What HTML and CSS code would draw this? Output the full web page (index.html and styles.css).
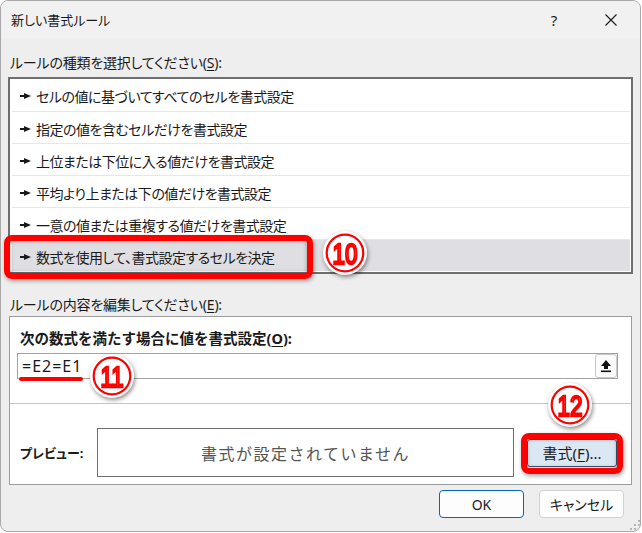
FILE: index.html
```html
<!DOCTYPE html>
<html lang="ja">
<head>
<meta charset="utf-8">
<title>新しい書式ルール</title>
<link rel="stylesheet" href="styles.css">
</head>
<body>
<div class="window">
  <div class="titlebar">
    <span class="title">新しい書式ルール</span>
    <span class="help">?</span>
    <span class="close"><svg width="12" height="12" viewBox="0 0 12 12"><path d="M0.5 0.5 L11.5 11.5 M11.5 0.5 L0.5 11.5" stroke="#1a1a1a" stroke-width="1.1" fill="none"/></svg></span>
  </div>
  <div class="body">
    <div class="label first">ルールの種類を選択してください(<u>S</u>):</div>
    <ul class="list">
      <li><svg class="arrow" width="11" height="6" viewBox="0 0 11 6"><rect x="0" y="2" width="5" height="2" fill="#1a1a1a"/><polygon points="4,0 11,3 4,6" fill="#1a1a1a"/></svg>セルの値に基づいてすべてのセルを書式設定</li>
      <li><svg class="arrow" width="11" height="6" viewBox="0 0 11 6"><rect x="0" y="2" width="5" height="2" fill="#1a1a1a"/><polygon points="4,0 11,3 4,6" fill="#1a1a1a"/></svg>指定の値を含むセルだけを書式設定</li>
      <li><svg class="arrow" width="11" height="6" viewBox="0 0 11 6"><rect x="0" y="2" width="5" height="2" fill="#1a1a1a"/><polygon points="4,0 11,3 4,6" fill="#1a1a1a"/></svg>上位または下位に入る値だけを書式設定</li>
      <li><svg class="arrow" width="11" height="6" viewBox="0 0 11 6"><rect x="0" y="2" width="5" height="2" fill="#1a1a1a"/><polygon points="4,0 11,3 4,6" fill="#1a1a1a"/></svg>平均より上または下の値だけを書式設定</li>
      <li><svg class="arrow" width="11" height="6" viewBox="0 0 11 6"><rect x="0" y="2" width="5" height="2" fill="#1a1a1a"/><polygon points="4,0 11,3 4,6" fill="#1a1a1a"/></svg>一意の値または重複する値だけを書式設定</li>
      <li class="selected"><svg class="arrow" width="11" height="6" viewBox="0 0 11 6"><rect x="0" y="2" width="5" height="2" fill="#1a1a1a"/><polygon points="4,0 11,3 4,6" fill="#1a1a1a"/></svg>数式を使用して、書式設定するセルを決定</li>
    </ul>
    <div class="label second">ルールの内容を編集してください(<u>E</u>):</div>
    <div class="group">
      <div class="heading">次の数式を満たす場合に値を書式設定(<u>O</u>):</div>
      <div class="input">
        <span class="formula">=E2=E1</span>
        <span class="refbtn"><svg width="12" height="14" viewBox="0 0 12 14"><polygon points="6,1 11,7 8,7 8,10 4,10 4,7 1,7" fill="#111"/><rect x="1" y="11.5" width="10" height="1.6" fill="#111"/></svg></span>
      </div>
      <div class="sep"></div>
      <div class="preview-row">
        <span class="plabel">プレビュー:</span>
        <div class="preview">書式が設定されていません</div>
        <span class="fmt">書式(<u>F</u>)...</span>
      </div>
    </div>
    <div class="buttons">
      <span class="btn ok">OK</span>
      <span class="btn cancel">キャンセル</span>
    </div>
  </div>

  <div class="frame frame-row"></div>
  <div class="frame frame-fmt"></div>
  <div class="underline"></div>
  <svg class="badge badge10" width="46" height="46" viewBox="0 0 46 46"><circle cx="23" cy="23" r="22" fill="#fff"/><circle cx="23" cy="23" r="18.3" fill="none" stroke="#f00" stroke-width="2.2"/><text x="23" y="33.5" text-anchor="middle" class="num" textLength="25" lengthAdjust="spacingAndGlyphs">10</text></svg>
  <svg class="badge badge11" width="46" height="46" viewBox="0 0 46 46"><circle cx="23" cy="23" r="22" fill="#fff"/><circle cx="23" cy="23" r="18.3" fill="none" stroke="#f00" stroke-width="2.2"/><text x="23" y="33.5" text-anchor="middle" class="num" textLength="23" lengthAdjust="spacingAndGlyphs">11</text></svg>
  <svg class="badge badge12" width="46" height="46" viewBox="0 0 46 46"><circle cx="23" cy="23" r="22" fill="#fff"/><circle cx="23" cy="23" r="18.3" fill="none" stroke="#f00" stroke-width="2.2"/><text x="23" y="33.5" text-anchor="middle" class="num" textLength="25" lengthAdjust="spacingAndGlyphs">12</text></svg>
  <svg class="grip" width="10" height="10" viewBox="0 0 10 10"><rect x="8" y="0" width="2" height="2" fill="#b4b4b4"/><rect x="4" y="4" width="2" height="2" fill="#b4b4b4"/><rect x="8" y="4" width="2" height="2" fill="#b4b4b4"/><rect x="0" y="8" width="2" height="2" fill="#b4b4b4"/><rect x="4" y="8" width="2" height="2" fill="#b4b4b4"/><rect x="8" y="8" width="2" height="2" fill="#b4b4b4"/></svg>
</div>
</body>
</html>
```

FILE: styles.css
```css
* { box-sizing: border-box; }
html, body { margin: 0; padding: 0; background: #ffffff; }
body {
  font-family: "Noto Sans", "Noto Sans CJK JP", sans-serif;
  color: #1a1a1a;
  font-size: 14px;
  font-feature-settings: "palt";
}
u { text-decoration: underline; text-underline-offset: 2px; }

.window {
  position: relative;
  width: 641px;
  height: 532px;
  border: 1px solid #a9a9a9;
  border-radius: 8px;
  background: #eeeeee;
  overflow: hidden;
  display: flex;
  flex-direction: column;
}

.titlebar {
  height: 37px;
  flex: none;
  display: flex;
  align-items: center;
  padding: 0 6px 0 10px;
  background: #f1f1f1;
}
.title { font-size: 13px; line-height: 20px; }
.help {
  margin-left: auto;
  width: 46px;
  text-align: center;
  font-size: 15px;
  line-height: 20px;
  color: #1a1a1a;
}
.close {
  margin-left: 11px;
  width: 46px;
  height: 20px;
  display: flex;
  align-items: center;
  justify-content: center;
}

.body {
  flex: 1;
  padding: 0 7px;
  display: flex;
  flex-direction: column;
}

.label { font-size: 14px; line-height: 20px; padding-left: 2px; letter-spacing: -0.2px; }
.label.first { margin-top: 15px; margin-bottom: 4px; }
.label.second { margin-top: 21px; margin-bottom: 1px; }

.list {
  list-style: none;
  margin: 0;
  padding: 0 0 1px 0;
  width: 625px;
  border: 2px solid #6f6f6f;
  background: #ffffff;
}
.list li {
  height: 32px;
  margin: 0 1px 0 2px;
  border-top: 1px solid #e7e7e7;
  display: flex;
  align-items: center;
  padding-left: 8px;
  font-size: 14px;
  letter-spacing: -0.5px;
  padding-top: 2px;
}
.list li:first-child { border-top: none; }
.list li.selected { background: #dfdfe3; }
.arrow { margin-right: 5px; flex: none; }

.group {
  margin-left: 1px;
  width: 623px;
  border: 1px solid #9c9c9c;
  background: #ffffff;
  padding: 11px 0 7px 0;
}
.heading {
  padding-left: 10px;
  font-size: 14.5px;
  font-weight: bold;
  line-height: 20px;
  font-feature-settings: normal;
}
.input {
  margin: 5px 0 0 7px;
  width: 601px;
  height: 26px;
  border: 1px solid #a3a3a3;
  display: flex;
  align-items: center;
}
.formula {
  padding-left: 4px;
  font-family: "Noto Sans", sans-serif;
  font-size: 16px;
  letter-spacing: 1px;
  line-height: 20px;
}
.refbtn {
  margin-left: auto;
  margin-right: 0;
  width: 22px;
  height: 24px;
  border: 1px solid #c9c9c9;
  border-radius: 3px;
  background: #fbfbfb;
  display: flex;
  align-items: center;
  justify-content: center;
}
.sep {
  margin-top: 24px;
  height: 1px;
  background: #c6c6c6;
}
.preview-row {
  display: flex;
  align-items: center;
  padding-top: 24px;
}
.plabel {
  width: 87px;
  padding-left: 10px;
  font-size: 13px;
  font-weight: bold;
}
.preview {
  width: 417px;
  height: 49px;
  border: 1px solid #707070;
  display: flex;
  align-items: center;
  justify-content: center;
  font-size: 16px;
  letter-spacing: 1.5px;
  color: #555555;
  font-feature-settings: normal;
}
.fmt {
  margin-left: 13px;
  width: 90px;
  height: 28px;
  border: 1px solid #3d5670;
  border-radius: 3px;
  background: #dbe7f3;
  display: flex;
  align-items: center;
  justify-content: center;
  font-size: 15px;
}

.buttons {
  margin-top: 5px;
  margin-right: 9px;
  display: flex;
  justify-content: flex-end;
  gap: 15px;
}
.btn {
  width: 85px;
  height: 28px;
  border-radius: 4px;
  display: flex;
  align-items: center;
  justify-content: center;
  font-size: 14px;
}
.btn.ok { background: #fdfdfd; border: 1px solid #0067c0; }
.btn.cancel { background: #fdfdfd; border: 1px solid #d2d2d2; }

/* annotation overlays */
.frame {
  position: absolute;
  border: 6px solid #ff0000;
  border-radius: 8px;
  box-shadow: 1px 2px 4px rgba(0,0,0,0.35), inset 0 0 4px rgba(0,0,0,0.35);
}
.frame-row { left: 3px; top: 234px; width: 309px; height: 44px; }
.frame-fmt { left: 520px; top: 432px; width: 102px; height: 41px; }
.underline {
  position: absolute;
  left: 18px;
  top: 376px;
  width: 64px;
  height: 4px;
  border-radius: 2px;
  background: #ff0000;
}
.badge {
  position: absolute;
  filter: drop-shadow(1px 2px 2px rgba(0,0,0,0.45));
}
.badge10 { left: 321px; top: 229px; }
.badge11 { left: 88px; top: 352px; }
.badge12 { left: 546px; top: 381px; }
.num {
  font-family: "Liberation Sans", sans-serif;
  font-size: 29px;
  font-weight: normal;
  fill: #ffffff;
  stroke: #ff0000;
  stroke-width: 2.4px;
}
.grip { position: absolute; left: 629px; top: 519px; }
```
